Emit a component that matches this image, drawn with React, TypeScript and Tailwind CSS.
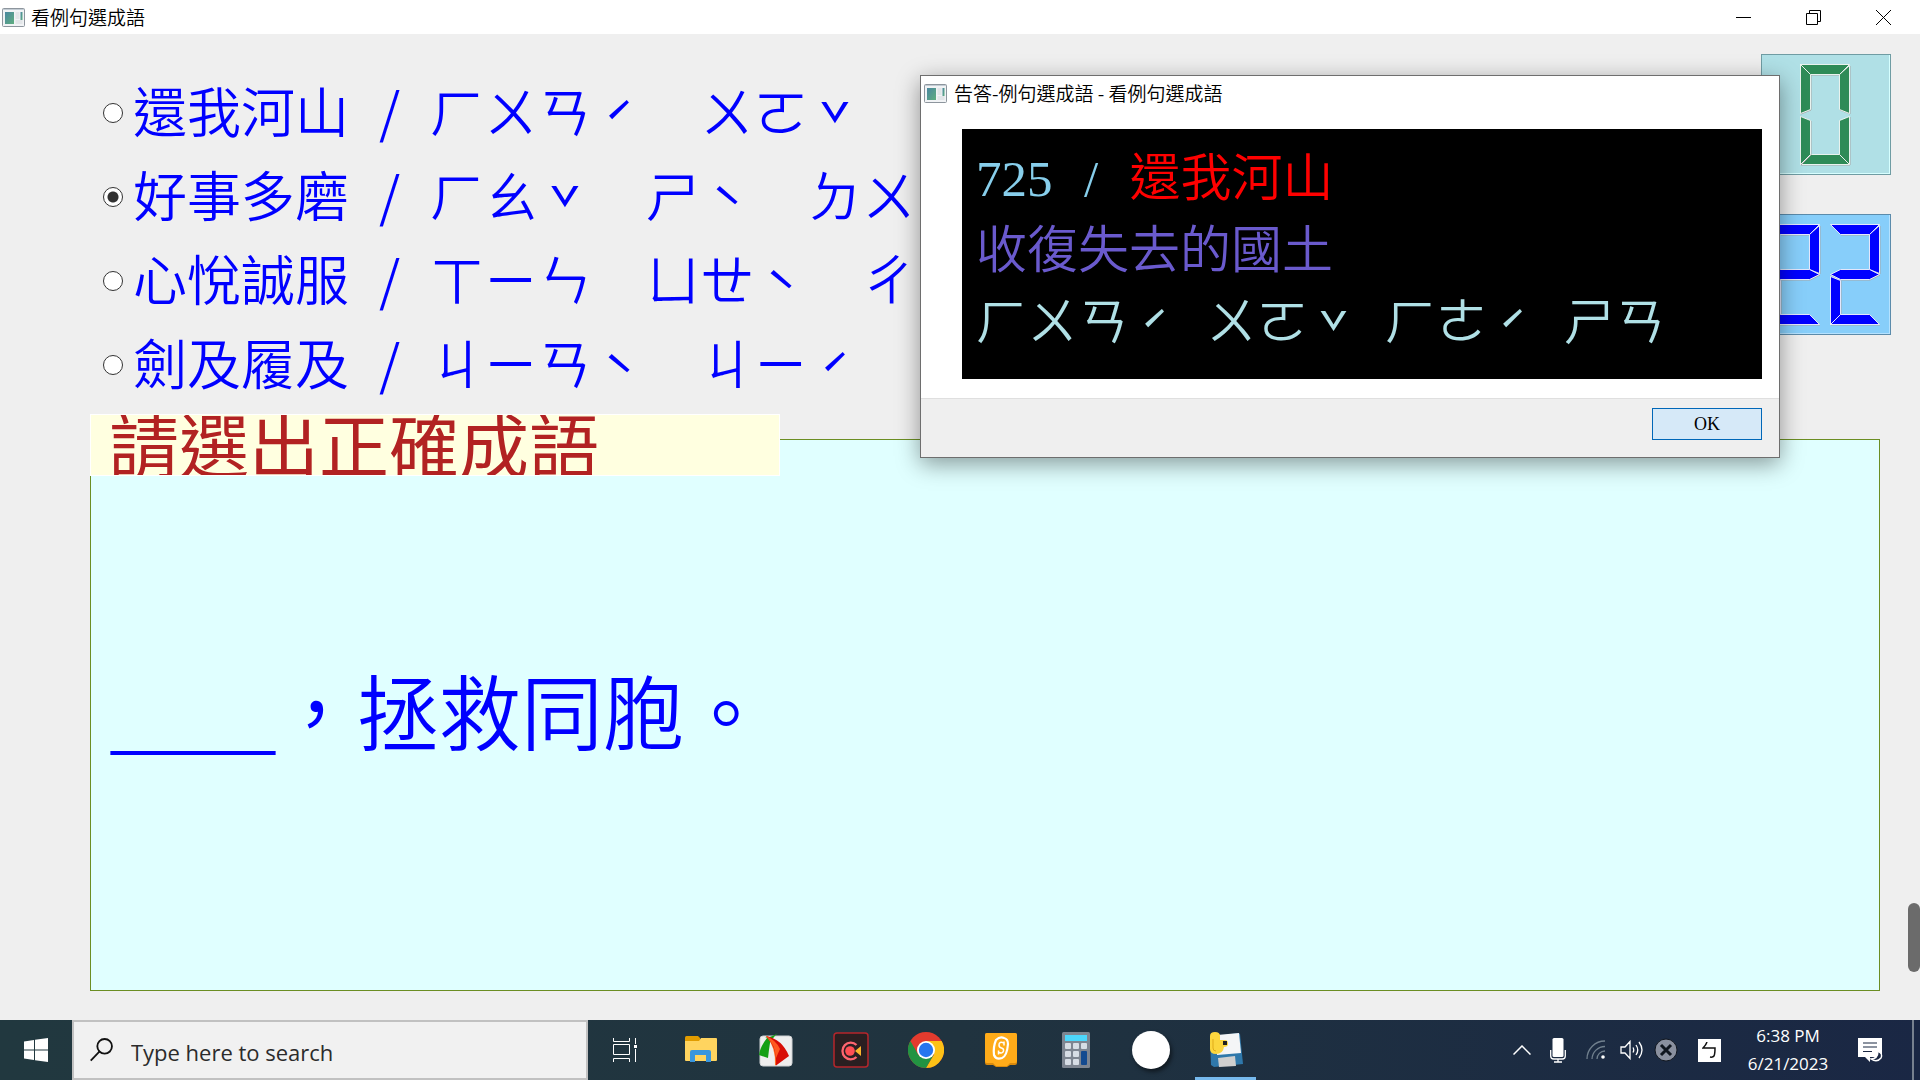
import { useState, type ReactNode } from 'react';

const CJK = "font-['Noto_Sans_CJK_TC',sans-serif]";
const MIXED = "font-['Liberation_Serif','Noto_Sans_CJK_TC',serif]";

const choices = [
  { idiom: '還我河山', sound: 'ㄏㄨㄢˊ　ㄨㄛˇ' },
  { idiom: '好事多磨', sound: 'ㄏㄠˇ　ㄕˋ　ㄉㄨ' },
  { idiom: '心悅誠服', sound: 'ㄒㄧㄣ　ㄩㄝˋ　ㄔ' },
  { idiom: '劍及履及', sound: 'ㄐㄧㄢˋ　ㄐㄧˊ' },
];

const answerSounds = ['ㄏㄨㄢˊ', 'ㄨㄛˇ', 'ㄏㄜˊ', 'ㄕㄢ'];

/* Bopomofo on a full-width grid: each tone mark takes a whole cell and sits at mid height. */
function Bopomofo({ text }: { text: string }) {
  return (
    <span>
      {text.split(/([ˊˇˋ])/).map((part, i) =>
        i % 2 ? (
          <span key={i} className={`inline-block w-[1em] text-center align-[-0.25em] font-normal leading-none ${CJK}`}>
            {part}
          </span>
        ) : (
          part
        ),
      )}
    </span>
  );
}

function AppIcon() {
  return (
    <svg width="23" height="19" viewBox="0 0 23 19" aria-hidden="true">
      <defs>
        <linearGradient id="pane" x1="0" y1="0" x2="1" y2="1">
          <stop offset="0" stopColor="#4a87a0" />
          <stop offset="1" stopColor="#5fae7f" />
        </linearGradient>
      </defs>
      <rect x="0.5" y="0.5" width="22" height="18" rx="1" fill="#f1f3f5" stroke="#8d959d" />
      <path d="M1 1.5h21" stroke="#c3ccd4" />
      <rect x="3" y="4" width="9" height="12" fill="url(#pane)" />
      <rect x="13.500" y="4" width="4" height="7" fill="#e2e5e8" />
      <rect x="13.500" y="12" width="7" height="4" fill="#e2e5e8" />
      <rect x="18.500" y="4" width="2" height="8" fill="url(#pane)" />
    </svg>
  );
}

const segmentShapes: Record<string, string> = {
  a: '1,1 50,1 40,11 11,11',
  b: '50,2 50,50 40,46 40,11',
  c: '50,53 50,101 40,91 40,57',
  d: '1,101 50,101 40,91 11,91',
  e: '1,53 11,57 11,91 1,101',
  f: '1,1 11,11 11,46 1,50',
  g: '1,51 11,46 40,46 50,51 40,56 11,56',
};

const digitSegments: Record<string, string> = { '0': 'abcdef', '2': 'abged' };

function Digit({ value, color }: { value: string; color: string }) {
  return (
    <svg width="51" height="102" viewBox="0 0 51 102" aria-hidden="true">
      {digitSegments[value].split('').map((s) => (
        <g key={s}>
          <polygon points={segmentShapes[s]} fill="none" stroke="#a8a8a8" strokeWidth="1" />
          <polygon points={segmentShapes[s]} fill={color} stroke="#ffffff" strokeWidth="1" transform="translate(-0.5 -0.5)" strokeOpacity="0.85" />
        </g>
      ))}
    </svg>
  );
}

function WindowButton({ label, children }: { label: string; children: ReactNode }) {
  return (
    <button type="button" aria-label={label} className="flex h-full w-[70px] items-center justify-center">
      {children}
    </button>
  );
}

function TaskButton({ label, active, children }: { label: string; active?: boolean; children: ReactNode }) {
  return (
    <button type="button" aria-label={label} className="relative flex h-full w-[75px] items-center justify-center">
      {children}
      {active && <span className="absolute inset-x-[7px] bottom-0 h-[3px] bg-[#76b9ed]" />}
    </button>
  );
}

function AnswerDialog() {
  return (
    <section
      role="dialog"
      aria-label="告答-例句選成語 - 看例句選成語"
      className="absolute right-[140px] top-[75px] flex w-[860px] flex-col border border-[#6e6e6e] bg-white shadow-[0_6px_22px_rgba(0,0,0,0.4)]"
    >
      <header className={`flex h-[34px] items-center gap-[7px] px-[3px] text-[19px] font-[350] text-black ${CJK}`}>
        <AppIcon />
        <h2 className="pb-[2px] leading-none">告答-例句選成語 - 看例句選成語</h2>
      </header>
      <div className={`mb-[19px] ml-[41px] mr-[17px] mt-[19px] h-[250px] whitespace-pre bg-black px-[14px] pt-[14px] text-[51px] font-[350] leading-[72px] ${MIXED}`}>
        <p className="flex h-[72px]">
          <span className="text-[#87ceeb]">725</span>
          <span className="w-[77px] text-center text-[#87ceeb]">/</span>
          <span className="text-[#ff0000]">還我河山</span>
        </p>
        <p className="flex h-[72px] text-[#6a5acd]">收復失去的國土</p>
        <p className="flex h-[72px] gap-[26px] text-[#b0e0e6]">
          {answerSounds.map((s) => (
            <Bopomofo key={s} text={s} />
          ))}
        </p>
      </div>
      <footer className="flex h-[59px] items-start justify-end border-t border-[#dfdfdf] bg-[#efefef] pr-[17px] pt-[9px]">
        <button
          type="button"
          className="h-8 w-[110px] border border-[#0067b8] bg-[#d6e9f8] font-['Liberation_Serif',serif] text-[18px] leading-none text-black"
        >
          OK
        </button>
      </footer>
    </section>
  );
}

function Taskbar() {
  return (
    <footer className="flex h-[60px] shrink-0 items-center bg-linear-to-r from-[#21383f] via-[#20333f] to-[#1a2744] text-white">
      <button type="button" aria-label="Start" className="flex h-full w-[72px] items-center justify-center">
        <svg width="24" height="24" viewBox="0 0 24 24" fill="#fff" aria-hidden="true">
          <path d="M0 3.400 10 2v9.500H0zM11 1.800 24 0v11.500H11zM0 12.500h10V22L0 20.600zM11 12.500h13V24l-13-1.800z" />
        </svg>
      </button>
      <label className="flex h-full w-[516px] items-center gap-[18px] border-2 border-[#c1c1c1] bg-[#f1f1f1] px-4">
        <svg width="25" height="26" viewBox="0 0 25 26" fill="none" stroke="#111" strokeWidth="2" aria-hidden="true">
          <circle cx="16" cy="9" r="8" />
          <path d="M10.500 14.500.8 24.500" />
        </svg>
        <input
          type="text"
          aria-label="Search"
          placeholder="Type here to search"
          className="w-full bg-transparent pt-1 font-['Open_Sans',sans-serif] text-[22px] outline-none placeholder:text-[#2b2b2b] placeholder:opacity-100"
        />
      </label>
      <nav aria-label="Pinned" className="flex h-full items-center">
        <TaskButton label="Task View">
          <svg width="25" height="24" viewBox="0 0 25 24" fill="none" stroke="#fff" aria-hidden="true">
            <path d="M.5 0v3.500h16V0M.5 6.500h16v10H.5zM.5 24v-3.500h16V24M22.500 0v6M22.500 11v13" />
            <path d="M21 7h3v3h-3z" fill="#fff" stroke="none" />
          </svg>
        </TaskButton>
        <TaskButton label="File Explorer">
          <svg width="32" height="28" viewBox="0 0 32 28" aria-hidden="true">
            <path d="M0 1.500Q0 0 1.500 0H13l2 2v4H0z" fill="#e19c00" />
            <path d="M0 5h14l2-3h15q1 0 1 1v21q0 1-1 1H1q-1 0-1-1z" fill="#ffd45f" />
            <path d="M5 26V16q0-2 2-2h17q2 0 2 2v10h-5v-7H10v7z" fill="#3996de" />
          </svg>
        </TaskButton>
        <TaskButton label="FastStone Capture">
          <svg width="34" height="34" viewBox="0 0 34 34" aria-hidden="true">
            <rect x="1" y="3" width="32" height="30" rx="3" fill="#eee" stroke="#cfd2d4" />
            <path d="M6 4Q12 5 19 0q-4 3-8 10-1 6-2 15L0 22Q1 14 8 5z" fill="#15a015" />
            <path d="M7 3Q12 4 14 8q5 10 3 24l-1 .5Q17 14 7 3z" fill="#ff6a20" />
            <path d="M7 3Q23 6 30 23l-13 9.500Q18 14 7 3z" fill="#d80d05" />
            <path d="M7 3q10 4 14 13l-4 9Q16 11 7 3z" fill="#ff5a20" />
          </svg>
        </TaskButton>
        <TaskButton label="Screen recorder">
          <svg width="36" height="36" viewBox="0 0 36 36" aria-hidden="true">
            <rect x="1" y="1" width="34" height="34" rx="3" fill="#2a1f21" stroke="#b5262b" strokeWidth="1.500" />
            <path d="M23.500 13A8.300 8.300 0 1 0 23.500 25" fill="none" stroke="#ff6670" strokeWidth="2.300" />
            <circle cx="17" cy="19" r="4.800" fill="#ff4f55" />
            <path d="m22 19 6-5v10z" fill="#fbb52c" />
          </svg>
        </TaskButton>
        <TaskButton label="Google Chrome">
          <svg width="36" height="36" viewBox="0 0 36 36" aria-hidden="true">
            <circle cx="18" cy="18" r="18" fill="#e33b2e" />
            <path d="M18 9h15.600A18 18 0 0 1 18 36l8-13.500z" fill="#fdc116" />
            <path d="M2.400 9 10.200 22.500Q14 28 25.800 22.500L18 36A18 18 0 0 1 2.400 9z" fill="#229342" />
            <circle cx="18" cy="18" r="9" fill="#fff" />
            <circle cx="18" cy="18" r="7.200" fill="#2676ee" />
          </svg>
        </TaskButton>
        <TaskButton label="Scratch">
          <svg width="32" height="34" viewBox="0 0 32 34" aria-hidden="true">
            <path d="M0 2q0-2 2-2h28q2 0 2 2v28q0 2-2 2h-5l-3 2H11l-3-2H2q-2 0-2-2z" fill="#d98a0d" />
            <path d="M0 2q0-2 2-2h28q2 0 2 2v26q0 2-2 2h-5l-3 3H11l-3-3H2q-2 0-2-2z" fill="#ffab19" />
            <path d="M11 7q4-4 8-2 4 1 4 6-1 12-6 14-6 2-8-3-1-8 2-15z" fill="none" stroke="#fff" strokeWidth="2.200" />
            <path d="M19 10q-5-2-5 2 0 2.500 2.500 3t2 3q-1 3-4.500 1.500M19 8.500v4M13.500 17.500v4" fill="none" stroke="#fff" strokeWidth="1.500" />
          </svg>
        </TaskButton>
        <TaskButton label="Calculator">
          <svg width="28" height="36" viewBox="0 0 28 36" aria-hidden="true">
            <rect width="28" height="36" rx="1.500" fill="#7d8591" />
            <rect x="3" y="3" width="22" height="6" fill="#4cd6fb" />
            <g fill="#d6dde5">
              <rect x="3" y="11" width="6" height="6" rx="1" />
              <rect x="11" y="11" width="6" height="6" rx="1" />
              <rect x="19" y="11" width="6" height="6" rx="1" />
              <rect x="3" y="19" width="6" height="6" rx="1" />
              <rect x="11" y="19" width="6" height="6" rx="1" />
              <rect x="3" y="27" width="6" height="6" rx="1" />
              <rect x="11" y="27" width="6" height="6" rx="1" />
            </g>
            <rect x="19" y="19" width="6" height="14" rx="1" fill="#134a90" />
          </svg>
        </TaskButton>
        <TaskButton label="Browser profile">
          <span className="h-[38px] w-[38px] rounded-full bg-white shadow-[2px_3px_4px_rgba(0,0,0,0.5)]" />
        </TaskButton>
        <TaskButton label="IDLE editor" active>
          <svg width="34" height="36" viewBox="0 0 34 36" aria-hidden="true">
            <path d="M1 5 29 1l2 1 3 30-29 3-3-2z" fill="#2f78ab" />
            <path d="m8 3 22-2 2 20-24 2z" fill="#f4f5f7" />
            <path d="m9 26 17-2 1 10-17 1z" fill="#cfcfcf" />
            <path d="M1 4q0-4 5-4t5 4v4h5q3 0 3 4 0 3-4 3-1 7-8 7-6 0-6-5z" fill="#fcd63e" />
            <path d="M4 7v9q0 3 3 3" fill="none" stroke="#e0ab18" />
            <rect x="14" y="9" width="4" height="4" fill="#222" />
          </svg>
        </TaskButton>
      </nav>
      <div className="ml-auto flex h-full items-center">
        <button type="button" aria-label="Show hidden icons" className="mr-[19px]">
          <svg width="18" height="10" viewBox="0 0 18 10" fill="none" stroke="#fff" strokeWidth="1.500" aria-hidden="true">
            <path d="m.5 9.500 8.500-8.500 8.500 8.500" />
          </svg>
        </button>
        <svg className="mr-[20px]" width="16" height="25" viewBox="0 0 16 25" role="img" aria-label="Microphone">
          <rect x="2.500" y="0" width="11" height="19" rx="1.500" fill="#fff" />
          <path d="M.7 12v6q0 3 3 3h8.600q3 0 3-3v-6M8 21v3M4 24h8" fill="none" stroke="#fff" strokeWidth="1.300" />
        </svg>
        <svg className="mr-[14px]" width="20" height="20" viewBox="0 0 20 20" fill="none" stroke="#71808e" strokeWidth="1.300" role="img" aria-label="Network">
          <path d="M1 19A18 18 0 0 1 19 1M6 19A13 13 0 0 1 19 6.500M11 19a8 8 0 0 1 8-8" />
          <circle cx="17" cy="17" r="1.800" fill="#fff" stroke="none" />
        </svg>
        <svg className="mr-[11px]" width="23" height="20" viewBox="0 0 23 20" fill="none" stroke="#fff" strokeWidth="1.300" role="img" aria-label="Volume">
          <path d="M1 7h4l5-5.500v17L5 13H1zM13 7.500q1.500 2.500 0 5M16 5q3.500 5 0 10M19 2q6 8 0 16" />
        </svg>
        <svg className="mr-[20px]" width="24" height="24" viewBox="0 0 24 24" role="img" aria-label="Stopped">
          <circle cx="12" cy="12" r="11" fill="#8a909f" stroke="#10161f" />
          <path d="m7 7 10 10M17 7 7 17" stroke="#10161f" strokeWidth="3" />
        </svg>
        <button type="button" aria-label="Input method" className="mr-[25px] flex h-[23px] w-[23px] items-center justify-center bg-white">
          <svg width="15" height="17" viewBox="0 0 15 17" fill="none" stroke="#111" strokeWidth="1.500" aria-hidden="true">
            <path d="M5 0q-1 3-4 6h12q0 6-1 8-1 1.500-4 1" />
          </svg>
        </button>
        <div className="w-[84px] whitespace-nowrap text-center font-['Open_Sans',sans-serif] text-[17px] leading-7">
          <p>6:38 PM</p>
          <p>6/21/2023</p>
        </div>
        <button type="button" aria-label="Notifications" className="ml-[28px] mr-[29px]">
          <svg width="25" height="25" viewBox="0 0 25 25" aria-hidden="true">
            <path d="M0 0h24v19H12v5l-5-5H0z" fill="#fff" />
            <path d="M5 5h14M5 9h14M5 13.500h9" stroke="#1b2843" strokeWidth="1.200" />
            <path d="M20 13q5 3 3 7-4 5-10 1 7 0 7-8z" fill="#1b2843" stroke="#fff" strokeWidth="1.400" />
          </svg>
        </button>
        <button type="button" aria-label="Show desktop" className="h-[60px] w-2 border-l-2 border-[#77818f]" />
      </div>
    </footer>
  );
}

export default function App() {
  const [selected, setSelected] = useState(1);
  return (
    <div className="relative flex min-h-screen flex-col bg-[#efefef]">
      <header className={`flex h-[34px] shrink-0 items-center bg-white pl-[2px] pr-[2px] text-[19px] font-[350] text-black ${CJK}`}>
        <AppIcon />
        <h1 className="ml-[6px] pb-[2px] leading-none">看例句選成語</h1>
        <div className="ml-auto flex h-full">
          <WindowButton label="Minimize">
            <svg width="15" height="1" aria-hidden="true"><path d="M0 .5h15" stroke="#000" /></svg>
          </WindowButton>
          <WindowButton label="Restore">
            <svg width="15" height="15" viewBox="0 0 15 15" fill="none" stroke="#000" aria-hidden="true">
              <path d="M.5 3.500h11v11H.5zM3.500 3.500v-3h11v11h-3" />
            </svg>
          </WindowButton>
          <WindowButton label="Close">
            <svg width="15" height="15" viewBox="0 0 15 15" stroke="#000" aria-hidden="true">
              <path d="m0 0 15 15M15 0 0 15" />
            </svg>
          </WindowButton>
        </div>
      </header>

      <main className="flex flex-1 flex-col pb-[29px]">
        <div className="flex justify-between pl-[103px] pr-[29px]">
          <fieldset className="pt-[37px]">
            <legend className="sr-only">成語</legend>
            {choices.map((c, i) => (
              <label key={c.idiom} className={`flex h-[84px] items-center whitespace-pre text-[54px] font-[350] leading-none text-[#0000ff] ${CJK}`}>
                <input
                  type="radio"
                  name="idiom"
                  checked={selected === i}
                  onChange={() => setSelected(i)}
                  className="mr-[10px] h-5 w-5 appearance-none rounded-full border border-[#333] bg-white checked:bg-[radial-gradient(circle,#333_5px,#fff_6px)]"
                />
                <span className="flex items-baseline pt-2">
                  <span>{c.idiom}</span>
                  <span className="w-[81px] text-center">/</span>
                  <Bopomofo text={c.sound} />
                </span>
              </label>
            ))}
          </fieldset>
          <div className="flex flex-col gap-[39px] pt-[20px]">
            <output aria-label="0" className="flex h-[121px] w-[130px] items-center justify-end border border-[#6f9ca3] bg-[#b0e0e6] pr-[39px] shadow-[inset_-1px_-1px_0_#d7ffff]">
              <Digit value="0" color="#2e8b57" />
            </output>
            <output aria-label="22" className="flex h-[121px] w-[130px] items-center justify-end gap-[9px] border border-[#5b8bab] bg-[#87cefa] pr-[9px] shadow-[inset_-1px_-1px_0_#b5e2ff]">
              <Digit value="2" color="#0000ff" />
              <Digit value="2" color="#0000ff" />
            </output>
          </div>
        </div>

        <section className="relative ml-[90px] mr-[40px] mt-[32px] flex flex-1 items-center border border-[#6b8e23] bg-[#e0ffff] pl-[20px]">
          <h2 className={`absolute -left-px -top-[26px] h-[62px] w-[690px] overflow-hidden border border-white bg-[#ffffe0] pl-[18px] text-[70px] font-normal leading-[56px] text-[#b22222] ${CJK}`}>
            請選出正確成語
          </h2>
          <p className={`pt-1 text-[82px] font-[350] leading-none text-[#0000ff] ${MIXED}`}>____，拯救同胞。</p>
        </section>
      </main>

      <span className="absolute right-0 top-[903px] h-[69px] w-3 rounded-full bg-[#6b6b6b]" />
      <AnswerDialog />
      <Taskbar />
    </div>
  );
}
